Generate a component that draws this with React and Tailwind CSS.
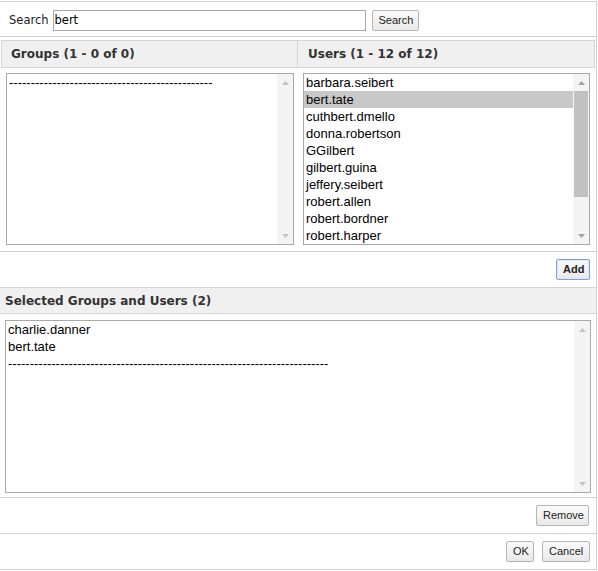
import React from "react";

const users = [
  "barbara.seibert",
  "bert.tate",
  "cuthbert.dmello",
  "donna.robertson",
  "GGilbert",
  "gilbert.guina",
  "jeffery.seibert",
  "robert.allen",
  "robert.bordner",
  "robert.harper",
];

const selected = ["charlie.danner", "bert.tate"];

const Arrow = ({ up, dim }) => (
  <div className="h-[17px] flex items-center justify-center">
    <svg width="7" height="4" viewBox="0 0 7 4">
      <path d={up ? "M0 4 L3.5 0 L7 4 Z" : "M0 0 L3.5 4 L7 0 Z"} fill={dim ? "#c3c3c3" : "#a3a3a3"} />
    </svg>
  </div>
);

const Scrollbar = ({ thumb }) => (
  <div className="w-[16px] flex flex-col bg-[#f4f4f4]">
    <Arrow up dim={!thumb} />
    <div className="flex-1 flex flex-col px-[1px]">
      {thumb && <div className="h-[106px] bg-[#c1c1c1]"></div>}
    </div>
    <Arrow dim={!thumb} />
  </div>
);

const Button = ({ children, className = "" }) => (
  <button
    className={
      "h-[21px] px-[6px] border rounded-[2px] bg-gradient-to-b from-[#fafafa] to-[#e9e9e9] text-[11px] text-[#222] leading-none " +
      className
    }
    style={{ fontFamily: '"Liberation Sans", Arial, sans-serif' }}
  >
    {children}
  </button>
);

const Header = ({ children, className = "" }) => (
  <div
    className={"flex items-center bg-[#f0f0f0] border-[#d6d6d6] text-[12px] font-bold text-[#333] " + className}
    style={{ fontFamily: '"DejaVu Sans", Verdana, sans-serif' }}
  >
    {children}
  </div>
);

const listFont = { fontFamily: '"Liberation Sans", Arial, sans-serif' };

export default function App() {
  return (
    <div className="w-[597px] mt-px border-t border-r border-b border-[#d0d0d0] bg-white">
      {/* search */}
      <div className="h-[35px] border-b border-[#d0d0d0] flex items-start pt-[8px] pl-[9px]">
        <span
          className="text-[11.5px] text-[#222] h-[21px] flex items-center"
          style={{ fontFamily: '"DejaVu Sans", Tahoma, sans-serif' }}
        >
          Search
        </span>
        <div
          className="ml-[4px] w-[313px] h-[21px] border border-[#a9a9a9] flex items-center pl-[1px] text-[11.5px] text-black"
          style={{ fontFamily: '"DejaVu Sans", Tahoma, sans-serif' }}
        >
          bert
        </div>
        <Button className="ml-[6px] w-[47px] border-[#b5b5b5]">Search</Button>
      </div>

      {/* groups / users */}
      <div className="flex pl-px pt-[3px] pb-[6px]">
        <div className="w-[297px] flex flex-col">
          <Header className="h-[28px] border pl-[9px]">Groups (1 - 0 of 0)</Header>
          <div className="mt-[5px] ml-[5px] w-[288px] h-[172px] border border-[#a9a9a9] flex">
            <div className="flex-1 overflow-hidden pl-[2px] text-[13px] text-black leading-[17px]" style={listFont}>
              <div>-----------------------------------------------</div>
            </div>
            <Scrollbar />
          </div>
        </div>
        <div className="w-[297px] flex flex-col">
          <Header className="h-[28px] border border-l-0 pl-[10px]">Users (1 - 12 of 12)</Header>
          <div className="mt-[5px] ml-[5px] w-[287px] h-[172px] border border-[#a9a9a9] flex">
            <div className="flex-1 overflow-hidden text-[13px] text-black leading-[17px]" style={listFont}>
              {users.map((u) => (
                <div key={u} className={"h-[17px] pl-[2px] " + (u === "bert.tate" ? "bg-[#c8c8c8]" : "")}>
                  {u}
                </div>
              ))}
            </div>
            <Scrollbar thumb />
          </div>
        </div>
      </div>

      {/* add */}
      <div className="h-[36px] border-t border-[#d0d0d0] flex items-center justify-end pr-[6px]">
        <Button className="w-[34px] font-bold border-[#7aa1de] from-[#f7f9fd] to-[#e8eef8] shadow-[inset_0_0_0_1px_#dfe8f7]">
          Add
        </Button>
      </div>

      {/* selected */}
      <Header className="h-[27px] border-t border-b pl-[5px]">Selected Groups and Users (2)</Header>
      <div className="pt-[6px] pb-[4px] pl-[5px]">
        <div className="w-[586px] h-[173px] border border-[#a9a9a9] flex">
          <div className="flex-1 overflow-hidden pl-[2px] text-[13px] text-black leading-[17px]" style={listFont}>
            {selected.map((s) => (
              <div key={s} className="h-[17px]">
                {s}
              </div>
            ))}
            <div>--------------------------------------------------------------------------</div>
          </div>
          <Scrollbar />
        </div>
      </div>

      {/* remove */}
      <div className="h-[36px] border-t border-[#d0d0d0] flex items-center justify-end pr-[7px]">
        <Button className="w-[53px] border-[#b5b5b5]">Remove</Button>
      </div>

      {/* ok / cancel */}
      <div className="h-[36px] border-t border-[#d0d0d0] flex items-center justify-end gap-[8px] pr-[6px]">
        <Button className="w-[28px] px-0 border-[#b5b5b5]">OK</Button>
        <Button className="w-[48px] px-0 border-[#b5b5b5]">Cancel</Button>
      </div>
    </div>
  );
}
